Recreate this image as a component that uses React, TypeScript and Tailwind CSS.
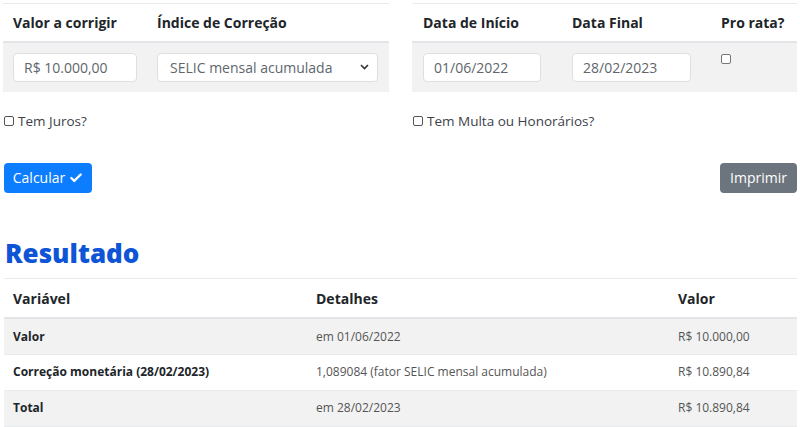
import { Check } from "lucide-react";

const font = { fontFamily: '"Open Sans", "Noto Sans", sans-serif' };

function Field({ value, w }: { value: string; w: string }) {
  return (
    <div
      className={`${w} h-[29px] flex items-center rounded-[4px] border border-[#dcdfe3] bg-white px-[10px] text-[14px] text-[#60666c]`}
    >
      {value}
    </div>
  );
}

const rows = [
  { v: "Valor", d: "em 01/06/2022", r: "R$ 10.000,00", bg: "bg-[#f2f2f2]" },
  {
    v: "Correção monetária (28/02/2023)",
    d: "1,089084 (fator SELIC mensal acumulada)",
    r: "R$ 10.890,84",
    bg: "bg-white",
  },
  { v: "Total", d: "em 28/02/2023", r: "R$ 10.890,84", bg: "bg-[#f2f2f2]" },
];

export default function App() {
  return (
    <div className="w-[800px] h-[427px] overflow-hidden bg-white text-[#212529]" style={font}>
      <div className="flex pt-[3px] pl-[3px] gap-[23px]">
        <div className="w-[386px]">
          <table className="w-full table-fixed border-collapse">
            <colgroup>
              <col className="w-[144px]" />
              <col />
            </colgroup>
            <thead>
              <tr className="h-[38px] border-t border-[#e9ecef] border-b-2 border-b-[#e3e5e8]">
                <th className="pl-[10px] text-left text-[14px] font-bold">Valor a corrigir</th>
                <th className="pl-[10px] text-left text-[14px] font-bold">Índice de Correção</th>
              </tr>
            </thead>
            <tbody>
              <tr className="h-[50px] bg-[#f2f2f2]">
                <td className="pl-[10px]">
                  <Field value="R$ 10.000,00" w="w-[124px]" />
                </td>
                <td className="pl-[10px]">
                  <div className="w-[221px] h-[29px] flex items-center justify-between rounded-[4px] border border-[#dcdfe3] bg-white pl-[12px] pr-[8px] text-[14px] text-[#60666c]">
                    <span>SELIC mensal acumulada</span>
                    <svg width="9" height="6" viewBox="0 0 9 6" fill="none">
                      <path d="M1 1l3.5 3.5L8 1" stroke="#333" strokeWidth="1.6" />
                    </svg>
                  </div>
                </td>
              </tr>
            </tbody>
          </table>
          <label className="mt-[19px] flex items-center gap-[4px] pl-[1px] text-[13.5px] text-[#3d4248]">
            <span className="h-[10px] w-[10px] rounded-[2px] border border-[#555]" />
            Tem Juros?
          </label>
        </div>
        <div className="w-[385px]">
          <table className="w-full table-fixed border-collapse">
            <colgroup>
              <col className="w-[150px]" />
              <col className="w-[149px]" />
              <col />
            </colgroup>
            <thead>
              <tr className="h-[38px] border-t border-[#e9ecef] border-b-2 border-b-[#e3e5e8]">
                <th className="pl-[11px] text-left text-[14px] font-bold">Data de Início</th>
                <th className="pl-[10px] text-left text-[14px] font-bold">Data Final</th>
                <th className="pl-[10px] text-left text-[14px] font-bold">Pro rata?</th>
              </tr>
            </thead>
            <tbody>
              <tr className="h-[50px] bg-[#f2f2f2]">
                <td className="pl-[11px]">
                  <Field value="01/06/2022" w="w-[118px]" />
                </td>
                <td className="pl-[10px]">
                  <Field value="28/02/2023" w="w-[119px]" />
                </td>
                <td className="pl-[10px] align-top pt-[11px]">
                  <span className="block h-[10px] w-[10px] rounded-[2px] border border-[#777] bg-white" />
                </td>
              </tr>
            </tbody>
          </table>
          <label className="mt-[19px] flex items-center gap-[4px] pl-[1px] text-[13.5px] text-[#3d4248]">
            <span className="h-[10px] w-[10px] rounded-[2px] border border-[#555]" />
            Tem Multa ou Honorários?
          </label>
        </div>
      </div>

      <div className="mt-[32px] flex justify-between pl-[4px] pr-[3px]">
        <button className="flex h-[30px] w-[88px] items-center justify-center gap-[4px] rounded-[4px] bg-[#0d7dff] text-[14px] text-white">
          Calcular
          <Check size={14} strokeWidth={4} />
        </button>
        <button className="h-[30px] w-[77px] rounded-[4px] bg-[#6c757d] text-[14px] text-white">
          Imprimir
        </button>
      </div>

      <h2 className="mt-[44px] pl-[5px] text-[26px] leading-[32px] font-extrabold text-[#0d55d6]">Resultado</h2>

      <table className="mt-[9px] ml-[4px] w-[793px] table-fixed border-collapse">
        <colgroup>
          <col className="w-[303px]" />
          <col className="w-[362px]" />
          <col />
        </colgroup>
        <thead>
          <tr className="h-[40px] border-t border-[#e9ecef] border-b-2 border-b-[#e3e5e8]">
            <th className="pl-[9px] text-left text-[14px] font-bold">Variável</th>
            <th className="pl-[9px] text-left text-[14px] font-bold">Detalhes</th>
            <th className="pl-[9px] text-left text-[14px] font-bold">Valor</th>
          </tr>
        </thead>
        <tbody>
          {rows.map((r) => (
            <tr key={r.v} className={`h-[36px] border-b border-[#e9ecef] ${r.bg}`}>
              <td className="pl-[9px] text-[12px] font-bold">{r.v}</td>
              <td className="pl-[9px] text-[12px] text-[#555]">{r.d}</td>
              <td className="pl-[9px] text-[12px] text-[#555]">{r.r}</td>
            </tr>
          ))}
        </tbody>
      </table>
    </div>
  );
}
